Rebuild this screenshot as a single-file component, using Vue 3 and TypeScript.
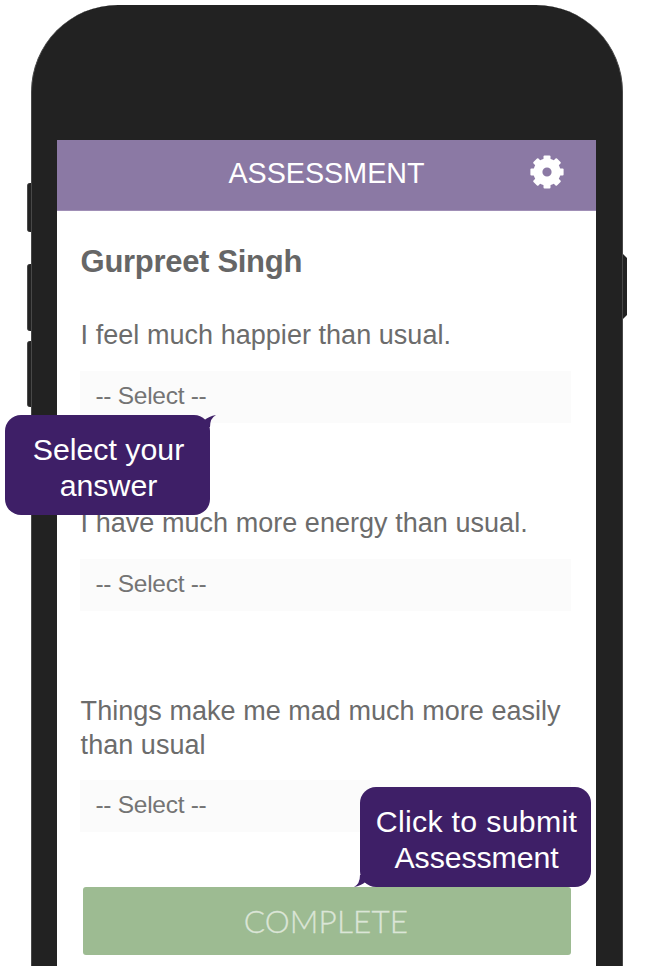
<script setup lang="ts">
interface Question {
  id: number
  text: string
}

const questions: Question[] = [
  { id: 1, text: 'I feel much happier than usual.' },
  { id: 2, text: 'I have much more energy than usual.' },
  { id: 3, text: 'Things make me mad much more easily than usual' },
]

const teeth: number[] = [0, 45, 90, 135, 180, 225, 270, 315]
</script>

<template>
  <div class="stage">
    <div class="phone">
      <span class="key key-mute"></span>
      <span class="key key-up"></span>
      <span class="key key-down"></span>
      <span class="key-power"></span>

      <main class="screen">
        <header class="bar">
          <h1 class="title">ASSESSMENT</h1>
          <svg class="gear" viewBox="-17 -17 34 34" width="34" height="34">
            <g fill="#fff">
              <rect
                v-for="angle in teeth"
                :key="angle"
                x="-3.5"
                y="-16.6"
                width="7"
                height="8"
                rx="1"
                :transform="`rotate(${angle})`"
              />
              <path
                fill-rule="evenodd"
                d="M0-13.6A13.6 13.6 0 1 1 0 13.6A13.6 13.6 0 1 1 0-13.6ZM0-4.6A4.6 4.6 0 1 0 0 4.6A4.6 4.6 0 1 0 0-4.6Z"
              />
            </g>
          </svg>
        </header>

        <section class="form">
          <h2 class="name">Gurpreet Singh</h2>
          <div v-for="q in questions" :key="q.id" class="question">
            <p class="prompt">{{ q.text }}</p>
            <div class="select">-- Select --</div>
          </div>
          <button class="complete" type="button">COMPLETE</button>
        </section>
      </main>
    </div>

    <div class="callout callout-select">
      <span class="line-select">Select your</span>
      <span class="line-answer">answer</span>
      <svg class="tail" viewBox="0 0 12 12" width="12" height="12">
        <path d="M0 5.5Q5 1.2 12 0Q6 3 6 12H0Z" fill="#3e1f67" />
      </svg>
    </div>

    <div class="callout callout-submit">
      <span class="line-click">Click to submit</span>
      <span class="line-assess">Assessment</span>
      <svg class="tail" viewBox="0 0 12 12" width="12" height="12">
        <path d="M12 6.5Q7 10.8 0 12Q6 9 6 0H12Z" fill="#3e1f67" />
      </svg>
    </div>
  </div>
</template>

<style>
body {
  margin: 0;
  background: #fff;
}
</style>

<style scoped>
.stage {
  position: relative;
  box-sizing: border-box;
  width: 655px;
  height: 966px;
  padding: 5px 0 0 31px;
  overflow: hidden;
  background: #fff;
  font-family: "Liberation Sans", Arial, sans-serif;
}

.phone {
  position: relative;
  box-sizing: border-box;
  width: 592px;
  height: 961px;
  padding: 135px 26px 0 25px;
  border: solid #484848;
  border-width: 0 1px;
  border-radius: 87px 87px 0 0;
  background: #222;
}

.key {
  position: absolute;
  left: -5px;
  box-sizing: border-box;
  width: 4px;
  border-left: 1px solid #4a4a4a;
  border-radius: 3px 0 0 3px;
  background: #222;
}

.key-mute {
  top: 178px;
  height: 49px;
}

.key-up {
  top: 259px;
  height: 67px;
}

.key-down {
  top: 336px;
  height: 66px;
}

.key-power {
  position: absolute;
  top: 249px;
  right: -5px;
  width: 4px;
  height: 65px;
  background: #222;
  clip-path: polygon(0 0, 4px 4px, 4px 61px, 0 65px);
}

.screen {
  width: 539px;
  height: 826px;
  background: #fff;
}

.bar {
  display: grid;
  grid-template-columns: 1fr auto 1fr;
  align-items: center;
  box-sizing: border-box;
  height: 71px;
  padding: 0 32px 7px;
  border-bottom: 1px solid #a08fb6;
  background: #8b79a4;
}

.title {
  grid-column: 2;
  margin: 0;
  padding-top: 2px;
  font-size: 28.7px;
  font-weight: 400;
  line-height: 34px;
  color: #fff;
}

.gear {
  justify-self: end;
}

.form {
  display: flex;
  flex-direction: column;
  padding: 32.5px 25px 0 23px;
}

.name {
  margin: 0 0 39.5px;
  padding-left: 0.6px;
  font-size: 31px;
  font-weight: 700;
  line-height: 36px;
  letter-spacing: -0.3px;
  color: #666;
}

.question {
  margin-bottom: 84.5px;
}

.question:last-of-type {
  margin-bottom: 55px;
}

.prompt {
  margin: 0 -5px 18px 0;
  padding-left: 0.6px;
  font-size: 27px;
  line-height: 33.5px;
  letter-spacing: 0.04px;
  color: #6c6c6c;
}

.select {
  box-sizing: border-box;
  height: 52px;
  padding-left: 15.4px;
  background: #fbfbfb;
  font-size: 24.5px;
  line-height: 50px;
  letter-spacing: -0.27px;
  color: #747474;
}

.complete {
  height: 68px;
  margin: 0 0 0 3px;
  padding: 0 2px 0 0;
  border: 0;
  border-radius: 3px;
  background: #9dbb92;
  font-family: Lato, sans-serif;
  font-size: 31.5px;
  font-weight: 300;
  letter-spacing: 0.15px;
  color: #dbe5d7;
  -webkit-text-stroke: 0.3px #dbe5d7;
}

.callout {
  position: absolute;
  display: flex;
  flex-direction: column;
  align-items: center;
  box-sizing: border-box;
  height: 100px;
  padding: 17px 0 0 2px;
  border-radius: 16px;
  background: #3e1f67;
  font-size: 30.3px;
  line-height: 36px;
  color: #fff;
  white-space: nowrap;
}

.callout-select {
  top: 415px;
  left: 5px;
  width: 205px;
}

.callout-submit {
  top: 787px;
  left: 360px;
  width: 231px;
}

.line-click {
  letter-spacing: 0.3px;
}

.line-assess {
  letter-spacing: -0.1px;
}

.tail {
  position: absolute;
}

.callout-select .tail {
  top: 0;
  right: -6px;
}

.callout-submit .tail {
  bottom: 0;
  left: -6px;
}
</style>
